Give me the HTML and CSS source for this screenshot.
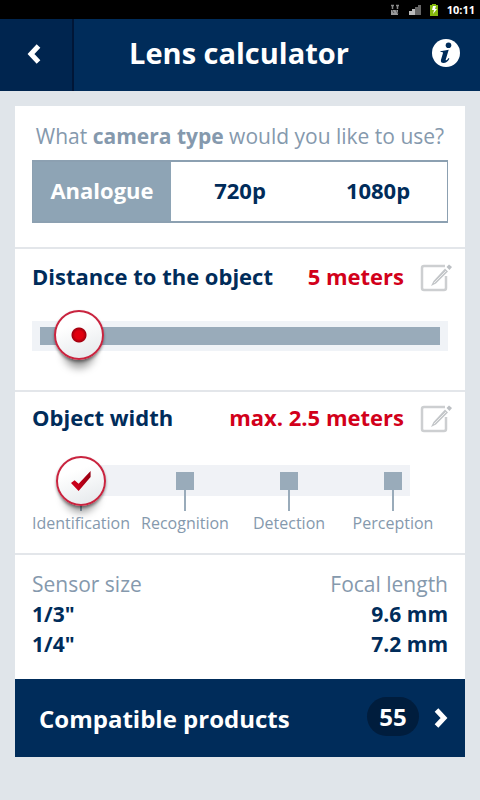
FILE: index.html
```html
<!DOCTYPE html>
<html lang="en">
<head>
    <meta charset="UTF-8">
    <meta name="viewport" content="width=device-width, initial-scale=1.0">
    <title>Lens calculator</title>
    <link rel="stylesheet" href="styles.css">
</head>
<body>
    <div class="status-bar">
        <svg width="10" height="12" viewBox="0 0 10 12" aria-hidden="true">
            <path d="M1 1.500h3M2.500 1v4M6 1.500h3M7.500 1v4" stroke="#888" stroke-width="1.500"/>
            <rect x="1" y="6" width="7" height="5" fill="#999"/>
            <path d="M2 6l2 3M6 6l2 4" stroke="#555"/>
        </svg>
        <svg width="13" height="12" viewBox="0 0 13 12" aria-hidden="true">
            <path d="M1 7h3v4H1zM4 5h3v6H4z" fill="#bbb"/>
            <path d="M7 3h3v8H7zM10 1h3v10h-3z" fill="#666"/>
        </svg>
        <svg width="10" height="12" viewBox="0 0 10 12" aria-hidden="true">
            <path d="M3 0h4v1h2v11H1V1h2z" fill="#84b80e"/>
            <path d="M4 2h3L6 5h2L4 10l1-4H3z" fill="#fff"/>
        </svg>
        <span class="clock">10:11</span>
    </div>

    <header class="header">
        <button class="back-button" aria-label="Back">
            <svg width="16" height="20" viewBox="0 0 16 20"><path d="M12.500 2L5 10l7.500 8" fill="none" stroke="#fff" stroke-width="5"/></svg>
        </button>
        <h1>Lens calculator</h1>
        <button class="info-button" aria-label="Information">
            <svg width="28" height="28" viewBox="0 0 28 28">
                <circle cx="14" cy="14" r="14" fill="#fff"/>
                <circle cx="16.500" cy="6.300" r="2.800" fill="#002c5a"/>
                <path d="M8.500 12.200c3-.4 5.500-1 8.200-1.500l-3 10c-.2.900.6.800 1.300.2l1.600-1.800.8.600c-1.700 2.900-3.600 4.300-5.900 4.300-2.100 0-3-1.300-2.500-3.300l2-6.600c.2-.9-.6-1.100-2.500-1.100z" fill="#002c5a"/>
            </svg>
        </button>
    </header>

    <main class="card">
        <section class="section camera-section">
            <p class="question" id="camera-question">What <b>camera type</b> would you like to use?</p>
            <div class="camera-types" role="group" aria-labelledby="camera-question">
                <button class="camera-type active" aria-pressed="true">Analogue</button>
                <button class="camera-type" aria-pressed="false">720p</button>
                <button class="camera-type" aria-pressed="false">1080p</button>
            </div>
        </section>

        <section class="section distance-section">
            <div class="section-title">
                <label for="distance">Distance to the object</label>
                <output class="value" id="distance-value" for="distance">5 meters</output>
                <button class="edit-button" aria-label="Edit distance">
                    <svg width="32" height="30" viewBox="0 0 32 30">
                        <path d="M25 3H4q-2 0-2 2v20q0 2 2 2h20q2 0 2-2V13" fill="none" stroke="#cdcfd1" stroke-width="2.500"/>
                        <path d="M11 23l2.500-5L25 5.500l3 3L16 20.500z" fill="#c3c6c9"/>
                        <path d="M14 20L26 8" stroke="#eee"/>
                        <path d="M26.500 4l2.500-2.500L32 4l-2.500 3z" fill="#bcc0c4"/>
                    </svg>
                </button>
            </div>
            <input type="range" class="distance-slider" id="distance" min="1" max="100" value="5">
        </section>

        <section class="section width-section">
            <div class="section-title">
                <h2>Object width</h2>
                <output class="value">max. 2.5 meters</output>
                <button class="edit-button" aria-label="Edit object width">
                    <svg width="32" height="30" viewBox="0 0 32 30">
                        <path d="M25 3H4q-2 0-2 2v20q0 2 2 2h20q2 0 2-2V13" fill="none" stroke="#cdcfd1" stroke-width="2.500"/>
                        <path d="M11 23l2.500-5L25 5.500l3 3L16 20.500z" fill="#c3c6c9"/>
                        <path d="M14 20L26 8" stroke="#eee"/>
                        <path d="M26.500 4l2.500-2.500L32 4l-2.500 3z" fill="#bcc0c4"/>
                    </svg>
                </button>
            </div>
            <div class="steps">
                <label class="step"><span class="step-mark"><input type="radio" name="level" checked></span>Identification</label>
                <label class="step"><span class="step-mark"><input type="radio" name="level"></span>Recognition</label>
                <label class="step"><span class="step-mark"><input type="radio" name="level"></span>Detection</label>
                <label class="step"><span class="step-mark"><input type="radio" name="level"></span>Perception</label>
            </div>
        </section>

        <section class="section results-section">
            <table class="results">
                <thead>
                    <tr><th>Sensor size</th><th>Focal length</th></tr>
                </thead>
                <tbody>
                    <tr><td>1/3"</td><td>9.6 mm</td></tr>
                    <tr><td>1/4"</td><td>7.2 mm</td></tr>
                </tbody>
            </table>
        </section>

        <a class="products-link" href="#">
            <span class="products-label">Compatible products</span>
            <span class="badge">55</span>
            <svg width="16" height="20" viewBox="0 0 16 20" aria-hidden="true"><path d="M3.500 2L11 10l-7.500 8" fill="none" stroke="#fff" stroke-width="5"/></svg>
        </a>
    </main>

    <script>
        const distance = document.getElementById('distance');
        distance.addEventListener('input', function() {
            document.getElementById('distance-value').textContent = distance.value + ' meters';
        });

        const types = document.querySelectorAll('.camera-type');
        types.forEach(button => {
            button.addEventListener('click', function() {
                types.forEach(other => {
                    other.classList.toggle('active', other === button);
                    other.setAttribute('aria-pressed', other === button);
                });
            });
        });
    </script>
</body>
</html>
```
FILE: styles.css
```css
* {
    box-sizing: border-box;
}

body {
    margin: 0;
    min-height: 100vh;
    background-color: #e0e5ea;
    color: #002c5a;
    font-family: "Open Sans", "Noto Sans", sans-serif;
}

button {
    margin: 0;
    padding: 0;
    border: none;
    background: none;
    color: inherit;
    font-family: inherit;
    cursor: pointer;
}

svg {
    display: block;
}

.status-bar {
    display: flex;
    justify-content: flex-end;
    align-items: center;
    gap: 8px;
    height: 19px;
    padding-right: 5px;
    background-color: #000;
    color: #fff;
}

.clock {
    font-size: 11px;
    font-weight: bold;
    line-height: 16px;
}

/* Header */
.header {
    display: flex;
    align-items: center;
    height: 72px;
    padding: 0 20px 4px 0;
    background-color: #002c5a;
    color: #fff;
}

.back-button {
    display: flex;
    justify-content: center;
    align-items: center;
    align-self: flex-start;
    width: 74px;
    height: 72px;
    padding: 0 4px 3px 0;
    background-color: #00254f;
    border-right: 2px solid #001637;
}

.header h1 {
    flex: 1;
    margin: 0;
    padding-right: 28px;
    font-size: 29px;
    line-height: 40px;
    text-align: center;
    white-space: nowrap;
}

/* Card */
.card {
    margin: 15px;
    background-color: #fff;
}

.section {
    padding: 0 17px;
    border-bottom: 2px solid #e3e6ea;
}

.camera-section {
    padding-top: 14px;
    padding-bottom: 24px;
}

.question {
    margin: 0 0 8px;
    color: #8599ad;
    font-size: 21px;
    line-height: 32px;
    text-align: center;
    white-space: nowrap;
}

.camera-types {
    display: flex;
    height: 63px;
    border: 1px solid #8ca0b1;
    border-width: 2px 1px;
}

.camera-type {
    flex: 1;
    padding-bottom: 4px;
    font-size: 22px;
    font-weight: bold;
}

.camera-type.active {
    background-color: #8ea4b5;
    color: #fff;
}

.section-title {
    display: flex;
    align-items: center;
    height: 30px;
    font-size: 22px;
    font-weight: bold;
    line-height: 26px;
    white-space: nowrap;
}

.section-title label,
.section-title h2,
.value {
    padding-bottom: 4px;
}

.section-title h2 {
    margin: 0;
    font-size: 22px;
}

.value {
    margin-left: auto;
    color: #d2001a;
}

.edit-button {
    margin: 0 -4px 0 16px;
}

.distance-section {
    padding-top: 14px;
    padding-bottom: 29px;
}

.distance-slider {
    display: block;
    width: 100%;
    height: 50px;
    margin: 18px 0 0;
    appearance: none;
    background: none;
    cursor: pointer;
}

.distance-slider::-webkit-slider-runnable-track {
    box-sizing: border-box;
    height: 30px;
    border: solid #f0f3f7;
    border-width: 6px 8px;
    background-color: #99abba;
}

.distance-slider::-webkit-slider-thumb {
    width: 50px;
    height: 50px;
    margin-top: -17px;
    appearance: none;
    border: 2px solid #c9243f;
    border-radius: 50%;
    background: radial-gradient(circle, #e2000f 4px, #a1000f 7px, transparent 8px), linear-gradient(160deg, #fff 30%, #e3e7ea);
    box-shadow: 0 2px 3px rgba(0, 0, 0, 0.4), 0 18px 8px -10px rgba(0, 0, 0, 0.4);
}

/* Object width steps */
.width-section {
    padding-top: 12px;
    padding-bottom: 18px;
}

.steps {
    display: grid;
    grid-template-columns: repeat(4, 1fr);
    margin: 22px 3px 0 -3px;
    background: linear-gradient(#f0f2f6, #f0f2f6) no-repeat 52px 9px / calc(100% - 87px) 31px;
}

.step {
    color: #8599ad;
    font-size: 16px;
    line-height: 24px;
    text-align: center;
    cursor: pointer;
}

.step-mark {
    display: flex;
    justify-content: center;
    align-items: center;
    height: 55px;
    padding-bottom: 5px;
    /* the line runs from the mark down to the label */
    background: linear-gradient(#99abba, #99abba) no-repeat center bottom / 2px 30px;
}

.step-mark input {
    flex: none;
    width: 18px;
    height: 18px;
    margin: 0;
    appearance: none;
    background-color: #99abba;
    cursor: pointer;
}

.step-mark input:checked {
    width: 50px;
    height: 50px;
    border: 2px solid #c9243f;
    border-radius: 50%;
    background: linear-gradient(160deg, #fff 30%, #e3e7ea);
    box-shadow: 0 2px 3px rgba(0, 0, 0, 0.4), 0 14px 8px -8px rgba(0, 0, 0, 0.4);
}

.step-mark input:checked::before {
    content: "";
    display: block;
    width: 20px;
    height: 20px;
    margin: 13px;
    background: linear-gradient(100deg, #c9001a 40%, #85000f);
    clip-path: polygon(0 60%, 18% 46%, 38% 64%, 98% 0, 98% 30%, 38% 100%);
}

/* Results */
.results-section {
    padding-top: 14px;
    padding-bottom: 20px;
    border-bottom: none;
}

.results {
    width: 100%;
    border-collapse: collapse;
    font-size: 21px;
    font-weight: bold;
    line-height: 30px;
    text-align: left;
}

.results th,
.results td {
    padding: 0;
}

.results th {
    color: #8599ad;
    font-weight: normal;
}

.results th:last-child,
.results td:last-child {
    text-align: right;
}

.products-link {
    display: flex;
    align-items: center;
    height: 78px;
    padding: 0 16px 0 24px;
    background-color: #002c5a;
    color: #fff;
    font-size: 24px;
    font-weight: bold;
    text-decoration: none;
    white-space: nowrap;
}

.badge {
    width: 52px;
    margin: 0 14px 4px auto;
    border-radius: 20px;
    background-color: #001d3d;
    line-height: 39px;
    text-align: center;
}
```
